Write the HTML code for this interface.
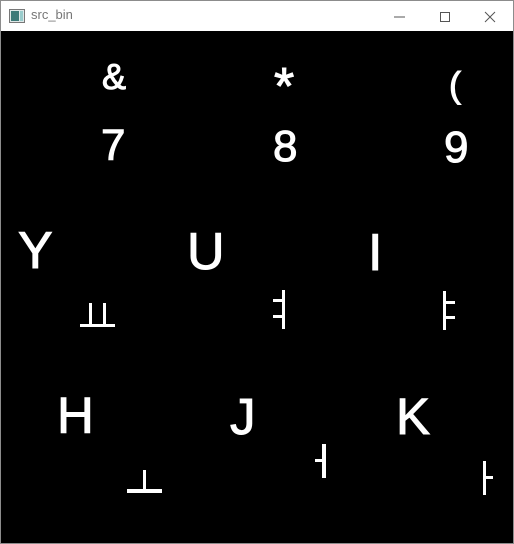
<!DOCTYPE html>
<html><head><style>
html,body{margin:0;padding:0;width:514px;height:544px;overflow:hidden;background:#fff;}
.win{position:absolute;left:0;top:0;width:512px;height:542px;border:1px solid #8c8c8c;background:#fff;}
.title{position:absolute;left:30px;top:6px;font:13px "Liberation Sans",sans-serif;color:#777;}
.canvas{position:absolute;left:0;top:30px;width:512px;height:512px;background:#000;}
</style></head><body>
<div class="win">
<svg style="position:absolute;left:8px;top:8px" width="16" height="14"><rect x="0.5" y="0.5" width="15" height="13" fill="#dfe8e8" stroke="#777"/><rect x="2" y="2" width="8" height="10" fill="#3d7a78"/><rect x="11" y="2" width="3" height="10" fill="#9cc"/></svg>
<div class="title">src_bin</div>
<svg style="position:absolute;left:390px;top:8px" width="110" height="16"><line x1="3" y1="8" x2="14" y2="8" stroke="#555"/><rect x="49.5" y="3.5" width="9" height="9" fill="none" stroke="#555"/><path d="M94 3L104 13M104 3L94 13" stroke="#555"/></svg>
<div class="canvas"></div>
</div>
<svg style="position:absolute;left:0;top:0" width="514" height="544" font-family="Liberation Sans, sans-serif" fill="#fff" stroke="#fff" stroke-width="1">
<text x="102" y="89" font-size="36">&amp;</text>
<text x="274" y="104" font-size="52">*</text>
<text x="449" y="97" font-size="36">(</text>
<text x="101" y="160" font-size="44">7</text>
<text x="273" y="161" font-size="44">8</text>
<text x="444" y="162" font-size="44">9</text>
<text x="18" y="268" font-size="52">Y</text>
<text x="187" y="269" font-size="52">U</text>
<text x="368" y="270" font-size="52">I</text>
<text x="57" y="433" font-size="51">H</text>
<text x="230" y="434" font-size="51">J</text>
<text x="396" y="434" font-size="51">K</text>
<g stroke="none">
<rect x="80" y="324" width="35" height="3"/><rect x="89" y="303" width="3" height="22"/><rect x="103" y="303" width="3" height="22"/>
<rect x="282" y="290" width="3" height="39"/><rect x="273" y="299" width="10" height="3"/><rect x="273" y="315" width="10" height="3"/>
<rect x="443" y="291" width="3" height="39"/><rect x="445" y="301" width="10" height="3"/><rect x="445" y="316" width="10" height="3"/>
<rect x="322" y="444" width="4" height="34"/><rect x="315" y="459" width="8" height="3"/>
<rect x="127" y="489" width="35" height="4"/><rect x="143" y="470" width="3" height="20"/>
<rect x="483" y="461" width="3" height="34"/><rect x="485" y="476" width="8" height="3"/>
</g>
</svg>
</body></html>
